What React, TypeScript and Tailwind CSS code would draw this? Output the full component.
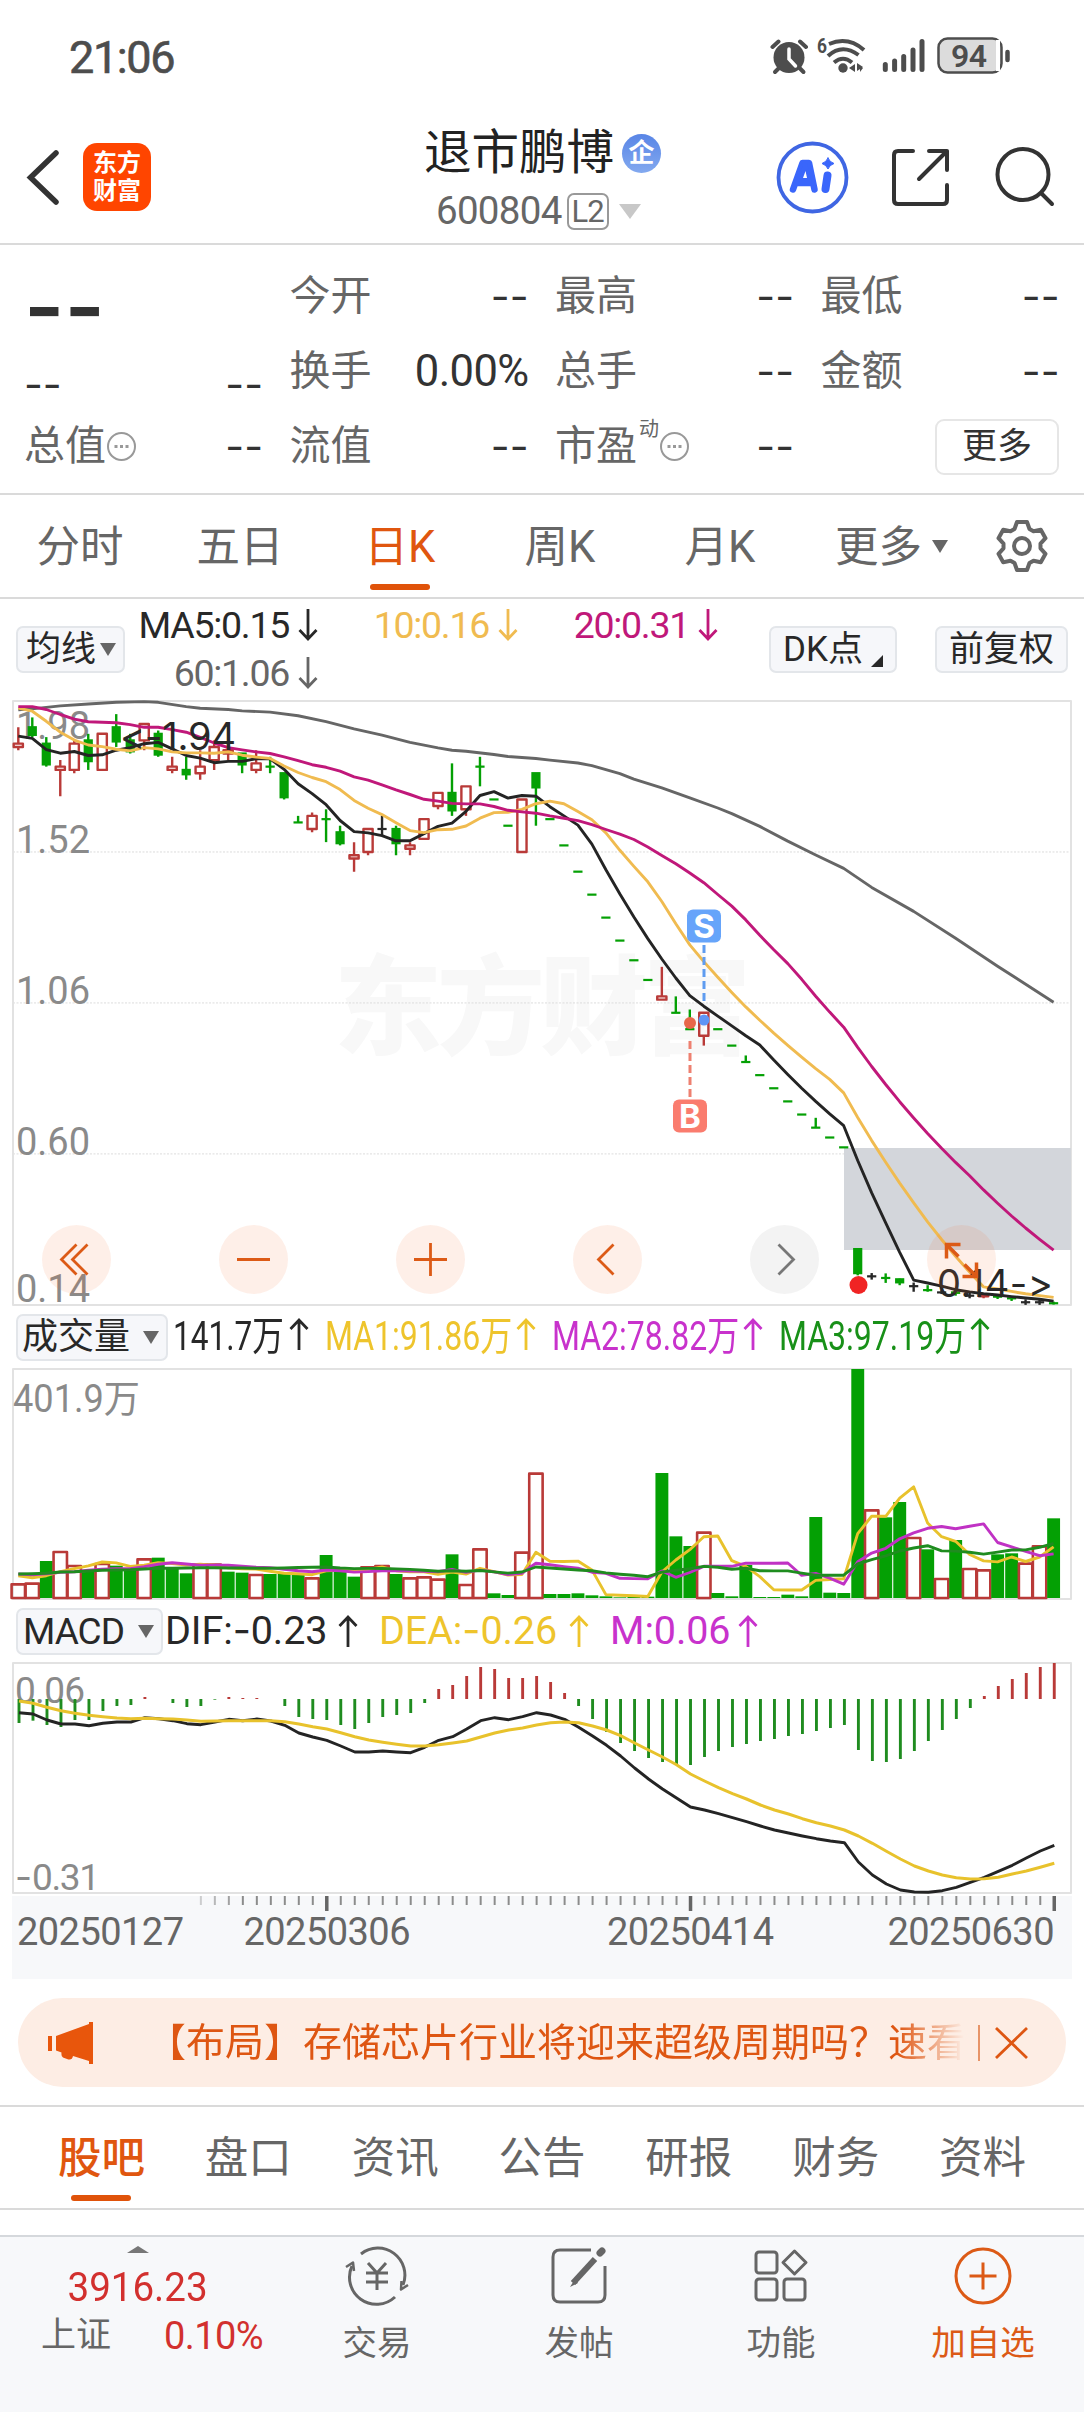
import type { ReactNode } from "react";
import clsx from "clsx";

type Candle = [open: number, high: number, low: number, close: number];

// prices in cents
const candles: Candle[] = [
  [184, 190, 183, 185], [190, 193, 187, 187], [185, 187, 178, 178], [177, 180, 169, 178], [177, 186, 176, 185],
  [186, 188, 177, 179], [177, 188, 177, 188], [190, 194, 184, 185], [186, 188, 182, 182], [186, 191, 183, 191],
  [188, 189, 181, 181], [177, 181, 176, 178], [177, 181, 174, 175], [176, 183, 174, 178], [180, 186, 177, 184],
  [182, 185, 180, 183], [182, 182, 176, 178], [177, 183, 176, 179], [178, 181, 176, 178], [176, 176, 168, 168],
  [161, 163, 161, 161], [159, 164, 158, 163], [162, 165, 155, 162], [158, 160, 154, 154], [150, 155, 146, 151],
  [152, 159, 151, 159], [159, 163, 157, 159], [159, 160, 151, 154], [153, 155, 151, 154], [156, 162, 156, 162],
  [166, 170, 165, 170], [170, 179, 163, 164], [165, 172, 163, 172], [178, 181, 172, 178], [168, 168, 168, 168],
  [160, 160, 160, 160], [152, 168, 152, 168], [176, 176, 160, 171], [162, 162, 162, 162], [154, 154, 154, 154],
  [146, 146, 146, 146], [139, 139, 139, 139], [132, 132, 132, 132], [125, 125, 125, 125], [119, 119, 119, 119],
  [113, 113, 113, 113], [107, 117, 107, 108], [103, 108, 103, 103], [98, 104, 98, 98], [96, 103, 93, 103],
  [98, 98, 98, 98], [93, 93, 93, 93], [88, 90, 88, 88], [84, 84, 84, 84], [80, 80, 80, 80],
  [76, 76, 76, 76], [72, 72, 72, 72], [68, 71, 68, 68], [65, 65, 65, 65], [62, 62, 62, 62],
  [31, 31, 23, 23], [22.7, 23.7, 21.7, 22.7], [22.2, 23.6, 20.7, 22.2], [21.8, 22, 20, 20.2], [19.7, 20.8, 18, 19.7],
  [18.5, 20, 18, 18.5], [17.8, 18.5, 17.3, 17.8], [17.8, 18, 16.8, 17], [16.8, 17.7, 16, 16.8], [16.6, 17.5, 16, 17],
  [16.5, 17, 15.8, 16.5], [16, 16, 15.2, 15.4], [14.8, 15.7, 14, 14.8], [14.8, 15.7, 14, 14.8], [14.5, 15, 14.1, 14.3],
];
const flatDays = [26, 61, 64, 66, 68, 72, 73];

const ma60: [number, number][] = [
  [0, 195.3], [1, 195.6], [3, 196.5], [5, 197.1], [7, 197.6], [9, 197.8], [10, 197.6], [12, 196.3], [13, 195.8],
  [15, 195.4], [16, 195], [18, 194.6], [20, 193.5], [22, 191.7], [24, 189.5], [26, 187.6], [28, 185.4], [30, 183.7],
  [31, 183], [32, 182.7], [34, 181.7], [35, 181.1], [36, 180.8], [37, 180.5], [38, 180], [40, 179.1], [41, 178.3],
  [42, 177.1], [43, 175.9], [44, 174.2], [46, 171.5], [48, 168.5], [50, 165.4], [51, 163.7], [53, 159.8], [55, 155.3],
  [57, 151.1], [59, 147], [61, 141.2], [64, 133.9], [67, 125.7], [70, 117.2], [74, 106.2],
];

const redVolume = [0, 1, 3, 4, 6, 9, 13, 14, 17, 21, 25, 26, 28, 29, 30, 32, 33, 36, 37, 49, 61, 64, 66, 68, 69, 72, 73];
const volume = [
  44, 46, 111, 141, 99, 84, 105, 97, 89, 119, 121, 91, 74, 104, 103, 79, 76, 72, 72, 72, 72, 62, 129, 79, 64, 95, 99,
  72, 62, 65, 58, 131, 42, 149, 14, 9, 139, 376, 12, 12, 14, 8, 5, 2, 4, 4, 375, 185, 156, 199, 15, 5, 99, 3, 3, 10, 5,
  243, 16, 15, 687, 266, 242, 288, 183, 146, 60, 174, 90, 86, 131, 134, 106, 158, 239,
];

const macd = [
  -72, -65, -78, -84, -63, -63, -36, -21, -18, 6, 0, -12, -24, -21, -2, 6, 3, 3, 0, -21, -54, -60, -63, -78, -90, -72,
  -54, -48, -42, -12, 30, 42, 69, 96, 90, 63, 63, 69, 51, 18, -21, -60, -99, -132, -156, -177, -189, -195, -198, -174,
  -156, -144, -135, -126, -120, -111, -105, -96, -87, -78, -153, -186, -189, -180, -156, -126, -93, -60, -27, 9, 39, 60,
  78, 96, 108,
];
const dif = [
  368, 372, 390, 402, 402, 407, 400, 396, 396, 383, 386, 392, 401, 404, 396, 388, 392, 387, 393, 406, 429, 441, 451,
  468, 486, 486, 483, 486, 488, 472, 451, 440, 417, 392, 383, 389, 380, 368, 375, 388, 412, 438, 466, 498, 534, 567,
  597, 624, 651, 660, 671, 683, 695, 708, 720, 729, 738, 746, 753, 758, 816, 855, 882, 900, 906, 907, 902, 892, 877,
  862, 844, 826, 804, 783, 766,
];
const dea = [
  333, 340, 352, 362, 370, 376, 380, 384, 386, 385, 386, 387, 390, 394, 393, 392, 392, 392, 392, 395, 402, 410, 417,
  428, 440, 450, 457, 463, 468, 468, 464, 459, 453, 441, 429, 420, 414, 405, 398, 396, 398, 408, 420, 437, 459, 480,
  501, 524, 552, 573, 593, 611, 627, 645, 660, 672, 686, 698, 708, 720, 738, 760, 784, 807, 828, 843, 855, 863, 867,
  866, 862, 852, 843, 832, 820,
];

const RED = "#b93a38";
const GREEN = "#04a004";
const LINE_GREEN = "#1f8c1f";

const x = (i: number) => 18.3 + i * 13.99;
const priceY = (p: number) => 701 + (198 - p) * 3.282;
const volumeY = (v: number) => 1598 - v / 3;
const macdY = (v: number) => 1590 + v / 3;

// the first values need days that are left of the visible range
function average(values: number[], period: number, seed: number[]) {
  return values.map((_, i) =>
    i < seed.length ? seed[i] : values.slice(i - period + 1, i + 1).reduce((a, b) => a + b, 0) / period
  );
}

const toPoints = (values: number[], y: (v: number) => number, dx = 0) =>
  values.map((v, i) => `${(x(i) + dx).toFixed(1)},${y(v).toFixed(1)}`).join(" ");

const closes = candles.map((c) => c[3]);
const ma5 = average(closes, 5, [187.3, 186.6, 183.2, 182.1]);
const ma10 = average(closes, 10, [195.8, 194.9, 191.8, 188.5, 186.1, 184.6, 184.1, 183.3, 182.8]);
const ma20 = average(closes, 20, [
  196.3, 196.3, 195.4, 193.9, 192.5, 191.7, 191.5, 191.4, 190.8, 190, 190, 189.3, 188.5, 186.9, 185.2, 183.8, 183.1,
  182.5, 182,
]);
const vol5 = average(volume, 5, [67, 61, 67, 79]);
const vol10 = average(volume, 10, [72, 70, 73, 77, 79, 83, 86, 88, 88]);
const vol20 = average(volume, 20, [72, 73, 74, 78, 79, 81, 83, 84, 85, 87, 89, 89, 90, 91, 91, 90, 90, 89, 89]);

function StatusBar() {
  return (
    <div className="flex h-[115px] items-start justify-between pl-[69px] pr-[72px] text-[#4d4d4d]">
      <div className="mt-[35px] text-[45px] leading-[46px] tracking-[-1.4px] [-webkit-text-stroke:0.6px_#4d4d4d]">21:06</div>
      <svg className="mt-[34px]" width="242" height="42" viewBox="770 34 242 42" fill="none" stroke="currentColor">
        <circle cx="789" cy="57.5" r="15.5" fill="currentColor" stroke="none" />
        <path d="M772.5 47l6-5.500M806 47l-6-5.500" strokeWidth="4" strokeLinecap="round" />
        <path d="M779 68l-4 4M799.500 68l4 4" strokeWidth="4" strokeLinecap="round" />
        <path d="M789 49v10l6.500 7" stroke="#fff" strokeWidth="3.500" strokeLinecap="round" />
        <text x="817" y="53" fontSize="21" fontWeight="700" fill="currentColor" stroke="none" textLength="10" lengthAdjust="spacingAndGlyphs">
          6
        </text>
        <g strokeWidth="4" strokeLinecap="butt">
          <path d="M829 44Q848 36 864 50" />
          <path d="M828 56Q842 43 858.500 55" />
          <path d="M834 62.500Q843 55 852 62.500" />
        </g>
        <circle cx="843" cy="68" r="4.700" fill="currentColor" stroke="none" />
        <path d="M855 64v8l-6-4zM857 63v8l6-4zM860 66v6l3-4z" fill="currentColor" stroke="none" />
        <g strokeWidth="5" strokeLinecap="round">
          <path d="M885.300 64.500v5M894.600 61v8.500M903.700 56.500v13M913 50v19.500M922 41.500v28" />
        </g>
        <rect x="938.500" y="38.500" width="63" height="34" rx="9" fill="#dcdcdc" strokeWidth="2.500" />
        <path d="M998 40v31" stroke="#fff" strokeWidth="4" />
        <text x="951" y="66.500" fontSize="32" fontWeight="600" fill="currentColor" stroke="none" textLength="36">
          94
        </text>
        <path d="M1007.500 52v8" strokeWidth="4.500" strokeLinecap="round" />
      </svg>
    </div>
  );
}

function Header() {
  return (
    <header className="flex h-[130px] items-start border-b-2 border-[#dadada]">
      <svg className="mt-[33px] ml-[24px]" width="38" height="58" viewBox="24 148 38 58" fill="none">
        <path d="M56 153L30.500 177.500L56 202" stroke="#333" strokeWidth="5.500" strokeLinecap="round" />
      </svg>
      <div className="mt-[28px] ml-[21px] flex h-[68px] w-[68px] flex-col items-center justify-center rounded-[14px] bg-[#ff4500] text-[24px] leading-[28px] font-bold text-white">
        <span>东方</span>
        <span>财富</span>
      </div>
      <div className="mt-[7px] ml-[273px] w-[241px]">
        <div className="flex h-[62px] items-center">
          <h1 className="text-[47.500px] leading-[62px] text-[#222]">退市鹏博</h1>
          <span className="ml-[8px] flex h-[39px] w-[39px] items-center justify-center rounded-full bg-linear-to-b from-[#5985e6] to-[#83a9ef] text-[26px] font-bold text-white">
            企
          </span>
        </div>
        <div className="mt-[7px] ml-[12px] flex items-center text-[#666]">
          <span className="text-[38.500px] leading-[40px] tracking-[-0.7px]">600804</span>
          <span className="ml-[5px] flex h-[37px] w-[42px] items-center justify-center rounded-[7px] border-2 border-[#999] text-[31px] leading-none tracking-[-1px]">
            L2
          </span>
          <span className="ml-[10px] border-x-[11px] border-t-[15px] border-x-transparent border-t-[#c8c8c8]" />
        </div>
      </div>
      <svg className="ml-auto" width="310" height="128" viewBox="774 115 310 128" fill="none" strokeLinecap="round" strokeLinejoin="round">
        <circle cx="812.500" cy="177.500" r="34" stroke="#3f66e3" strokeWidth="3.800" />
        <path d="M793 189.500L802.500 163h6.500l5.500 26.500M797 183h15" stroke="#3a66fb" strokeWidth="6.500" />
        <path d="M803 163l4 0 5 20h-13z" fill="#3a66fb" />
        <path d="M805.500 171l1.500 7h-4z" fill="#fff" />
        <path d="M827.500 175.500L825.500 189" stroke="#3a66fb" strokeWidth="8" />
        <path d="M828 158q1.500 4 6 5.500q-4.500 1.500-6 5.500q-1.500-4-6-5.500q4.500-1.500 6-5.500z" fill="#3a66fb" stroke="#3a66fb" />
        <g stroke="#333" strokeWidth="4">
          <path d="M913 151H898q-4 0-4 4v45q0 4 4 4h45q4 0 4-4v-15" />
          <path d="M929 151h18v19M947 151L919 179" />
          <circle cx="1023" cy="174.500" r="25.500" />
          <path d="M1041.500 193.500L1052 204" />
        </g>
      </svg>
    </header>
  );
}

const Dashes = ({ className }: { className?: string }) => (
  <span className={clsx("font-['Inter'] text-[#333]", className ?? "text-[41px]")}>--</span>
);

const More = () => (
  <svg className="shrink-0" width="31" height="31" viewBox="0 0 31 31" fill="none" stroke="#999" strokeWidth="2">
    <circle cx="15.500" cy="15.500" r="13.500" />
    <path d="M8.500 15.500h3M14 15.500h3M19.500 15.500h3" strokeWidth="3" />
  </svg>
);

function Cell({ label, children }: { label?: ReactNode; children?: ReactNode }) {
  return (
    <div className="flex h-[75px] w-[239px] items-center justify-between text-[41px] text-[#666]">
      <span className="flex items-center">{label}</span>
      {children ?? <Dashes />}
    </div>
  );
}

function Quote() {
  return (
    <section className="grid h-[250px] auto-rows-[75px] grid-cols-4 content-start gap-x-[27px] border-b-2 border-[#dadada] pt-[14px] pr-[25px] pl-[24px]">
      <div className="flex h-[75px] items-center">
        <Dashes className="mt-[20px] text-[87px] leading-none font-semibold" />
      </div>
      <Cell label="今开" />
      <Cell label="最高" />
      <Cell label="最低" />
      <Cell label={<Dashes className="mt-[26px] text-[41px]" />}>
        <Dashes className="mt-[26px] text-[41px]" />
      </Cell>
      <Cell label="换手">
        <span className="text-[43.500px] tracking-[-0.6px] text-[#333]">0.00%</span>
      </Cell>
      <Cell label="总手" />
      <Cell label="金额" />
      <Cell label={<>总值<More /></>} />
      <Cell label="流值" />
      <Cell
        label={
          <>
            市盈
            <sup className="top-[-18px] ml-[2px] text-[20px]">动</sup>
            <More />
          </>
        }
      />
      <div className="flex h-[75px] items-center justify-end">
        <button className="h-[56px] w-[124px] rounded-[9px] border-2 border-[#e6e6e6] text-[35px] leading-none text-[#333]">
          更多
        </button>
      </div>
    </section>
  );
}

function PeriodTabs() {
  const tabs = ["分时", "五日", "日K", "周K", "月K"];
  return (
    <nav className="flex h-[104px] border-b-2 border-[#dadada] text-[43.500px] text-[#666]">
      {tabs.map((tab) => (
        <div key={tab} className={clsx("flex w-[160px] flex-col items-center", tab === "日K" && "text-[#e0560f]")}>
          <span className="mt-[22px] leading-[62px]">{tab}</span>
          {tab === "日K" && <span className="mt-[5px] h-[6px] w-[60px] rounded-full bg-[#e0530a]" />}
        </div>
      ))}
      <div className="flex w-[181px] pl-[35px]">
        <span className="mt-[22px] leading-[62px]">更多</span>
        <span className="mt-[45px] ml-[10px] h-0 border-x-[8px] border-t-[13px] border-x-transparent border-t-[#666]" />
      </div>
      <svg className="mt-[23px] ml-[13px]" width="56" height="56" viewBox="-28 -28 56 56" fill="none" stroke="#666" strokeWidth="4" strokeLinejoin="round">
        <path d="M-5-24H5L7.500-17L11.500-14.700L18.800-16.200L23.500-7.800L18.500-2.300V2.300L23.500 7.800L18.800 16.200L11.500 14.700L7.500 17L5 24H-5L-7.500 17L-11.500 14.700L-18.800 16.200L-23.500 7.800L-18.500 2.300V-2.300L-23.500-7.800L-18.800-16.200L-11.500-14.700L-7.500-17Z" />
        <circle r="8" />
      </svg>
    </nav>
  );
}

function Arrow({ down }: { down?: boolean }) {
  return (
    <svg
      className={clsx("shrink-0", down && "rotate-180")}
      width="20"
      height="34"
      viewBox="0 0 20 34"
      fill="none"
      stroke="currentColor"
      strokeWidth="2.800"
    >
      <path d="M10 33V3M1.500 12L10 3L18.500 12" />
    </svg>
  );
}

const Chip = ({ className, children }: { className: string; children: ReactNode }) => (
  <button
    className={clsx(
      "flex h-[47px] shrink-0 items-center rounded-[7px] border-2 border-[#e3e6ea] bg-[#f6f7fa] leading-none whitespace-nowrap text-[#282828]",
      className
    )}
  >
    {children}
  </button>
);

const Caret = () => <span className="border-x-[8px] border-t-[13px] border-x-transparent border-t-[#666]" />;

function PriceLegend() {
  return (
    <div className="flex h-[101px] pl-[16px] text-[37.500px] leading-[50px]">
      <Chip className="mt-[27px] w-[109px] gap-[4px] pl-[8px] text-[35px]">
        均线
        <Caret />
      </Chip>
      <div className="mt-[2px] grid w-[593px] auto-rows-[48px] grid-cols-[193px_200px_200px] tracking-[-1.3px]">
        <div className="flex items-center justify-end gap-[9px] text-[#282828]">MA5:0.15<Arrow down /></div>
        <div className="flex items-center justify-end gap-[9px] text-[#f0bb50]">10:0.16<Arrow down /></div>
        <div className="flex items-center justify-end gap-[9px] text-[#c0187a]">20:0.31<Arrow down /></div>
        <div className="flex items-center justify-end gap-[9px] text-[#666]">60:1.06<Arrow down /></div>
      </div>
      <Chip className="mt-[27px] ml-[51px] w-[128px] pl-[12px] text-[35px]">
        DK点
        <svg className="mt-[22px] ml-[8px]" width="12" height="12">
          <path d="M12 0v12H0z" fill="#282828" />
        </svg>
      </Chip>
      <Chip className="mt-[27px] ml-[38px] w-[133px] justify-center text-[35px]">前复权</Chip>
    </div>
  );
}

function CandleShape({ index }: { index: number }) {
  const [open, high, low, close] = candles[index];
  const cx = x(index);
  const top = priceY(Math.max(open, close));
  const bottom = priceY(Math.min(open, close));
  if (close > open) {
    return (
      <g stroke={RED} strokeWidth="2.400" fill="none">
        <path d={`M${cx} ${priceY(high)}V${top}M${cx} ${bottom}V${priceY(low)}`} />
        <rect x={cx - 4.600} y={top} width="9.200" height={bottom - top} />
      </g>
    );
  }
  const color = flatDays.includes(index) ? "#282828" : GREEN;
  return (
    <g stroke={color} fill={color}>
      <path d={`M${cx} ${priceY(high)}V${priceY(low)}`} strokeWidth="2.400" />
      <rect x={cx - 4.600} y={top - 1.100} width="9.200" height={Math.max(bottom - top, 2.200)} stroke="none" />
    </g>
  );
}

function RoundButton({ muted, children }: { muted?: boolean; children: ReactNode }) {
  return (
    <button
      className={clsx(
        "h-[69px] w-[69px] rounded-full",
        muted ? "bg-[#333]/6 text-[#777]" : "bg-[#f8702a]/11 text-[#dc5a16]"
      )}
    >
      <svg width="69" height="69" viewBox="-34.500 -34.500 69 69" fill="none" stroke="currentColor" strokeWidth="2.800">
        {children}
      </svg>
    </button>
  );
}

function PriceChart() {
  return (
    <div className="relative h-[606px]">
      <svg className="block" width="1084" height="606" viewBox="0 700 1084 606" fill="none" strokeLinejoin="round">
        <text x="334" y="1046" fontSize="108" fontWeight="900" fill="#f8f8f8" textLength="417">东方财富</text>
        {[152, 106, 60].map((p) => (
          <path key={p} d={`M13 ${priceY(p)}H1071`} stroke="#dcdcdc" strokeWidth="1" strokeDasharray="2 1.500" />
        ))}
        <rect x="13" y="701" width="1058" height="604" stroke="#e2e2e2" strokeWidth="2" />
        <rect x="844" y="1148" width="227" height="102" fill="#d3d6db" />
        <g fontSize="38" fill="#8a8a8a">
          <text x="16" y="738.500" textLength="74">1.98</text>
          <text x="16" y="852.500" textLength="74">1.52</text>
          <text x="16" y="1004" textLength="74">1.06</text>
          <text x="16" y="1155" textLength="74">0.60</text>
          <text x="16" y="1302" textLength="74">0.14</text>
        </g>
        {candles.map((_, i) => (
          <CandleShape key={i} index={i} />
        ))}
        <g strokeWidth="2.900">
          <polyline points={ma60.map(([i, v]) => `${x(i)},${priceY(v)}`).join(" ")} stroke="#666" />
          <polyline points={toPoints(ma5, priceY)} stroke="#242424" />
          <polyline points={toPoints(ma10, priceY)} stroke="#f0bb50" />
          <polyline points={toPoints(ma20, priceY)} stroke="#c0187a" />
        </g>
        <circle cx="858.500" cy="1285" r="9" fill="#f02424" />
        <path d="M704 945v56" stroke="#5f9cf0" strokeWidth="3" strokeDasharray="8 4" />
        <path d="M690 1041v56" stroke="#ee8070" strokeWidth="3" strokeDasharray="8 4" />
        <circle cx="704" cy="1020" r="5.500" fill="#5f95f6" />
        <circle cx="690" cy="1023" r="6" fill="#e8684a" />
        <rect x="687" y="909.500" width="34" height="33" rx="6" fill="#66a4fa" />
        <rect x="673" y="1099.500" width="34" height="33" rx="6" fill="#fa7c6e" />
        <g fontSize="33" fontWeight="700" fill="#fff" textAnchor="middle" className="font-['Inter']">
          <text x="704" y="938">S</text>
          <text x="690" y="1128">B</text>
        </g>
        <g fontSize="38" fill="#282828" className="font-['Inter'] [font-feature-settings:'calt'_0]">
          <text x="120" y="749.500" textLength="116">&lt;-1.94</text>
          <text x="937" y="1297" textLength="116">0.14-&gt;</text>
        </g>
      </svg>
      <div className="absolute top-[525px] left-[42px] flex gap-[108px]">
        <RoundButton><path d="M0-15L-15 0L0 15M11-15L-4 0L11 15" /></RoundButton>
        <RoundButton><path d="M-16.500 0h33" /></RoundButton>
        <RoundButton><path d="M-16.500 0h33M0-16.500v33" /></RoundButton>
        <RoundButton><path d="M6-15L-9 0L6 15" /></RoundButton>
        <RoundButton muted><path d="M-6-15L9 0L-6 15" /></RoundButton>
        <RoundButton><path d="M-3-3L-15-15M-15-1V-15H-1M3 5L15 17M15 3V17H1" strokeWidth="3.500" /></RoundButton>
      </div>
    </div>
  );
}

function VolumeLegend() {
  return (
    <div className="flex h-[62px] items-center pl-[16px] text-[40px] leading-none whitespace-nowrap">
      <Chip className="w-[152px] gap-[13px] pl-[4px] text-[36px]">
        成交量
        <Caret />
      </Chip>
      <div className="ml-[5px] flex w-[152px] text-[#282828]">
        <span className="w-[116px]"><span className="inline-block origin-left scale-x-[0.79]">141.7万</span></span>
        <Arrow />
      </div>
      <div className="flex w-[227px] text-[#eec42c]">
        <span className="w-[191px]"><span className="inline-block origin-left scale-x-[0.8]">MA1:91.86万</span></span>
        <Arrow />
      </div>
      <div className="flex w-[227px] text-[#c832cc]">
        <span className="w-[191px]"><span className="inline-block origin-left scale-x-[0.8]">MA2:78.82万</span></span>
        <Arrow />
      </div>
      <div className="flex text-[#189018]">
        <span className="w-[191px]"><span className="inline-block origin-left scale-x-[0.8]">MA3:97.19万</span></span>
        <Arrow />
      </div>
    </div>
  );
}

function VolumeChart() {
  return (
    <svg className="block" width="1084" height="232" viewBox="0 1368 1084 232" fill="none" strokeLinejoin="round">
      <rect x="13" y="1369" width="1058" height="230" stroke="#e2e2e2" strokeWidth="2" />
      <text x="13" y="1412" fontSize="38" fill="#8a8a8a" textLength="127" lengthAdjust="spacingAndGlyphs">401.9万</text>
      {volume.map((v, i) =>
        redVolume.includes(i) ? (
          <rect key={i} x={x(i) - 6.700} y={volumeY(v) + 1} width="13.400" height={v / 3 - 1} stroke={RED} strokeWidth="2.600" />
        ) : (
          <rect key={i} x={x(i) - 6.400} y={volumeY(v)} width="12.900" height={v / 3} fill={GREEN} />
        )
      )}
      <g strokeWidth="2.900">
        <polyline points={toPoints(vol5, volumeY)} stroke="#e8c22c" />
        <polyline points={toPoints(vol10, volumeY)} stroke="#c032c4" />
        <polyline points={toPoints(vol20, volumeY)} stroke={LINE_GREEN} />
      </g>
    </svg>
  );
}

function MacdLegend() {
  return (
    <div className="flex h-[62px] items-center pl-[16px] text-[39.500px] leading-none tracking-[-0.1px] whitespace-nowrap">
      <Chip className="w-[147px] gap-[14px] pl-[5px] text-[37px] tracking-[-1px]">
        MACD
        <Caret />
      </Chip>
      <div className="ml-[2px] flex w-[214px] items-center text-[#282828]">
        <span className="w-[173px]">DIF:<span className="font-['Inter']">-</span>0.23</span>
        <Arrow />
      </div>
      <div className="flex w-[231px] items-center text-[#eec42c]">
        <span className="w-[190px]">DEA:<span className="font-['Inter']">-</span>0.26</span>
        <Arrow />
      </div>
      <div className="flex items-center text-[#c832cc]">
        <span className="w-[128px]">M:0.06</span>
        <Arrow />
      </div>
    </div>
  );
}

function MacdChart() {
  return (
    <svg className="block" width="1084" height="318" viewBox="0 1662 1084 318" fill="none" strokeLinejoin="round">
      <rect x="12" y="1896" width="1060" height="83" fill="#f7f8fa" />
      <rect x="13" y="1663" width="1058" height="230" stroke="#e2e2e2" strokeWidth="2" />
      <g fontSize="37" fill="#8a8a8a">
        <text x="15" y="1702.500" textLength="70">0.06</text>
        <text x="15" y="1889.500" className="font-['Inter']">-</text>
        <text x="32" y="1889.500" textLength="68">0.31</text>
      </g>
      {macd.map((v, i) => (
        <path key={i} d={`M${x(i) + 0.700} 1699v${-v / 3}`} stroke={v > 0 ? RED : LINE_GREEN} strokeWidth="2.900" />
      ))}
      <polyline points={toPoints(dif, macdY, 0.700)} stroke="#242424" strokeWidth="2.900" />
      <polyline points={toPoints(dea, macdY, 0.700)} stroke="#e8c22c" strokeWidth="3" />
      {macd.map((_, i) => {
        if (i < 13) return null;
        const major = [22, 48, 74].includes(i);
        return (
          <path
            key={i}
            d={`M${x(i) + 0.700} 1896v${major ? 15 : 9}`}
            stroke={major ? "#666" : "#8c8c8c"}
            strokeWidth={major ? 3.500 : 2}
            opacity={i < 16 ? (i - 11) / 5 : 1}
          />
        );
      })}
      <g fontSize="38" fill="#666">
        <text x="17" y="1944.500" textLength="167">20250127</text>
        <text x="243.500" y="1944.500" textLength="167">20250306</text>
        <text x="607" y="1944.500" textLength="167">20250414</text>
        <text x="887.500" y="1944.500" textLength="167">20250630</text>
      </g>
    </svg>
  );
}

function Banner() {
  return (
    <div className="h-[125px] px-[18px] pt-[18px]">
      <div className="flex h-[89px] items-center rounded-full bg-[#fdede4] pl-[30px] text-[#de5612]">
        <svg width="46" height="42" viewBox="48 2021 46 42" fill="#e8560c">
          <path d="M48 2035h4v15h-4zM56 2035l33-12v-2h4v42h-4v-3l-16-5q-1 5-6 3l-4-1.500q-2-1-1.500-5l-5.500-2z" />
        </svg>
        <div className="ml-[53px] w-[819px] overflow-hidden mask-[linear-gradient(to_right,black_750px,transparent_817px)] text-[39px] leading-[56px] whitespace-nowrap">
          【布局】存储芯片行业将迎来超级周期吗？速看
        </div>
        <span className="ml-[12px] h-[36px] w-[2px] bg-[#e79468]" />
        <svg className="ml-[14px]" width="36" height="34" viewBox="0 0 36 34" stroke="currentColor" strokeWidth="2.800">
          <path d="M2 2L33 32M33 2L2 32" />
        </svg>
      </div>
    </div>
  );
}

function ContentTabs() {
  const tabs = ["股吧", "盘口", "资讯", "公告", "研报", "财务", "资料"];
  return (
    <nav className="flex h-[105px] border-y-2 border-[#dadada] px-[28px] text-[43.500px] text-[#666]">
      {tabs.map((tab, i) => (
        <div key={tab} className={clsx("flex flex-1 flex-col items-center", i === 0 && "font-medium text-[#e0560f]")}>
          <span className="mt-[21px] leading-[62px]">{tab}</span>
          {i === 0 && <span className="mt-[5px] h-[6px] w-[60px] rounded-full bg-[#e0530a]" />}
        </div>
      ))}
    </nav>
  );
}

function BottomItem({ label, active, children }: { label: string; active?: boolean; children: ReactNode }) {
  return (
    <div className={clsx("flex w-[202px] flex-col items-center", active ? "text-[#dc5a16]" : "text-[#666]")}>
      <svg className="mt-[9px]" width="66" height="60" viewBox="-33 -30 66 60" fill="none" stroke="currentColor" strokeWidth="3" strokeLinejoin="round">
        {children}
      </svg>
      <span className="mt-[12px] text-[34.500px] leading-[50px]">{label}</span>
    </div>
  );
}

function BottomBar() {
  return (
    <footer className="mt-[25px] flex h-[177px] border-t-2 border-[#d5d8dc] bg-[#f7f8fa]">
      <div className="w-[276px]">
        <div className="mt-[9px] flex justify-center">
          <span className="border-x-[11px] border-b-[7px] border-x-transparent border-b-[#777]" />
        </div>
        <div className="mt-[12px] text-center text-[41px] leading-[44px] text-[#d2302e]">
          <span className="inline-block scale-x-[0.94]">3916.23</span>
        </div>
        <div className="flex items-center justify-between pt-[3px] pr-[13px] pl-[41px] text-[35px] leading-[48px] text-[#666]">
          上证
          <span className="text-[38px] tracking-[-0.6px] text-[#d2302e]">0.10%</span>
        </div>
      </div>
      <BottomItem label="交易">
        <path d="M-16-22A27 27 0 0 1 26 9M18 21A27 27 0 0 1 -25-10" />
        <path d="M-31-9L-24-13.500L-23-5M31 9L24 13.500L24.500 5" strokeWidth="2.500" />
        <path d="M-9-13L0-3L9-13M0-3V14M-11-3H11M-11 6H11" />
      </BottomItem>
      <BottomItem label="发帖">
        <path d="M12-26H-19q-7 0-7 7V19q0 7 7 7H19q7 0 7-7V-10" />
        <path d="M16-17L-6 7" strokeWidth="6" />
        <path d="M-4 3l-5 8l8-4z" fill="currentColor" stroke="none" />
        <path d="M21-23L23-25" strokeWidth="7" strokeLinecap="round" />
      </BottomItem>
      <BottomItem label="功能">
        <rect x="-25" y="-24" width="21" height="21" rx="3" />
        <rect x="-25" y="3" width="21" height="21" rx="3" />
        <rect x="3" y="3" width="21" height="21" rx="3" />
        <path d="M13.500-25L25-13.500L13.500-2L2-13.500Z" />
      </BottomItem>
      <BottomItem label="加自选" active>
        <circle r="27" />
        <path d="M-13.500 0h27M0-13.500v27" />
      </BottomItem>
    </footer>
  );
}

export default function App() {
  return (
    <div className="w-[1084px] overflow-hidden bg-white font-['Roboto','Noto_Sans_CJK_SC',sans-serif]">
      <StatusBar />
      <Header />
      <Quote />
      <PeriodTabs />
      <PriceLegend />
      <PriceChart />
      <VolumeLegend />
      <VolumeChart />
      <MacdLegend />
      <MacdChart />
      <Banner />
      <ContentTabs />
      <BottomBar />
    </div>
  );
}
